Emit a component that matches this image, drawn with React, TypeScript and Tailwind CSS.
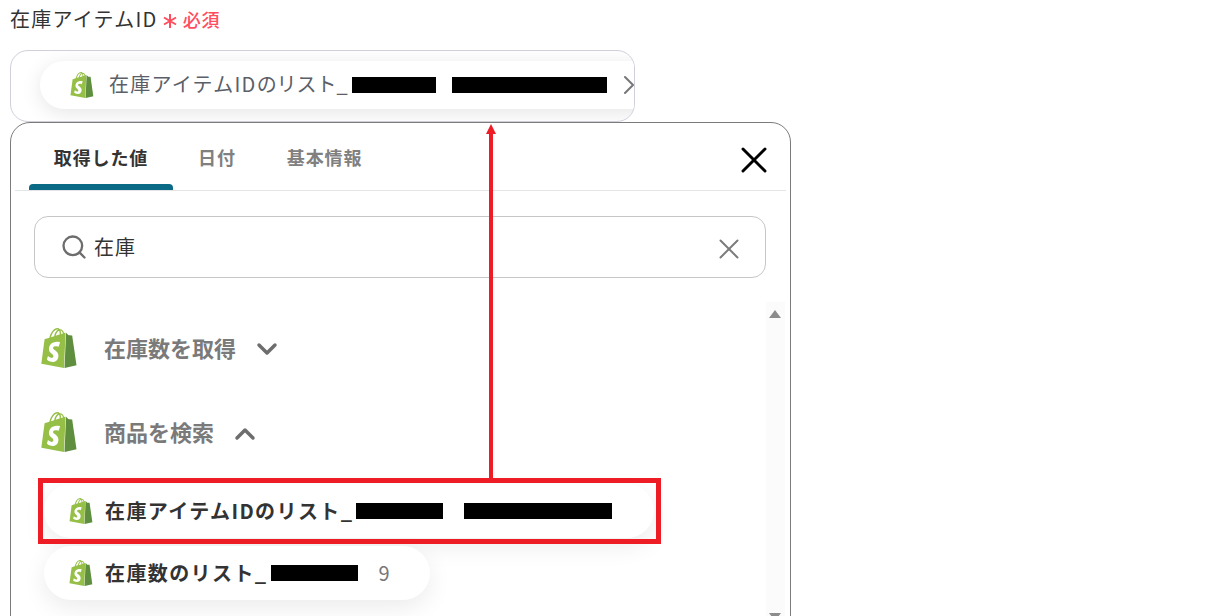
import React from 'react';
import { ChevronDown, ChevronRight, ChevronUp, Search, X } from 'lucide-react';

const FONT = "font-['Noto_Sans_CJK_JP','Noto_Sans',sans-serif]";

const ShopifyIcon: React.FC<{ className: string }> = ({ className }) => (
  <svg viewBox="0 0 24 24" className={className}>
    <path
      fill="#95bf47"
      d="M11.71 11.305s-.81-.424-1.774-.424c-1.447 0-1.504.906-1.504 1.141 0 1.232 3.24 1.715 3.24 4.629 0 2.295-1.44 3.76-3.406 3.76-2.354 0-3.54-1.465-3.54-1.465l.646-2.086s1.245 1.066 2.28 1.066c.675 0 .975-.545.975-.932 0-1.619-2.654-1.694-2.654-4.359-.034-2.237 1.571-4.416 4.827-4.416 1.257 0 1.875.361 1.875.361l-.945 2.715-.02.01zM11.17.83c.136 0 .271.038.405.135-.984.465-2.064 1.639-2.508 3.992-.656.213-1.293.405-1.889.578C7.697 3.75 8.951.84 11.17.84V.83zm1.235 2.949v.135c-.754.232-1.583.484-2.394.736.466-1.777 1.333-2.645 2.085-2.971.193.501.309 1.176.309 2.1zm.539-2.234c.694.074 1.141.867 1.429 1.755-.349.114-.735.231-1.158.366v-.252c0-.752-.096-1.371-.271-1.871v.002zm2.992 1.289c-.02 0-.06.021-.078.021s-.289.075-.714.21c-.423-1.233-1.176-2.37-2.508-2.37h-.115C12.135.209 11.669 0 11.265 0 8.159 0 6.675 3.875 6.21 5.848c-1.194.365-2.063.636-2.16.674-.675.213-.694.232-.772.87-.075.462-1.83 14.063-1.83 14.063L15.009 24l.927-21.166z"
    />
    <path
      fill="#5e8e3e"
      d="M15.337 23.979l7.216-1.561s-2.604-17.613-2.625-17.73c-.018-.116-.114-.192-.211-.192s-1.929-.136-1.929-.136-1.275-1.274-1.439-1.411c-.045-.037-.075-.057-.121-.074l-.914 21.104h.023z"
    />
  </svg>
);

const Redacted: React.FC<{ className: string }> = ({ className }) => (
  <span className={`inline-block h-4 bg-black ${className}`} />
);

const App: React.FC = () => {
  const tabs = ['日付', '基本情報'];

  return (
    <div className={`relative h-[616px] w-[1208px] overflow-hidden bg-white ${FONT}`}>
      <div className="px-[10px] pt-[4px]">
        <div className="flex h-[30px] items-center text-[20px] leading-[30px] text-[#333333]">
          <span className="tracking-[1.25px]">在庫アイテムID</span>
          <svg viewBox="0 0 14 14" className="ml-[5px] mt-[3px] h-[14px] w-[14px]">
            <path d="M7 0v14M1 3.5l12 7M13 3.5l-12 7" stroke="#ff4d5e" strokeWidth="2" fill="none" />
          </svg>
          <span className="ml-[6px] text-[18px] font-medium tracking-[1px] text-[#ff4d5e]">必須</span>
        </div>

        {/* selected value field */}
        <div className="mt-[16px] flex h-[72px] w-[625px] items-center overflow-hidden rounded-[18px] border border-[#cfd0da] bg-white pb-[2px] pl-[29px]">
          <div className="flex h-[48px] w-[620px] shrink-0 items-center rounded-l-full bg-white pl-[29px] text-[20px] text-[#5b6068] shadow-[0_4px_20px_rgba(0,0,0,0.1)]">
            <ShopifyIcon className="mr-[14px] h-[26px] w-[26px] shrink-0" />
            <span className="mb-[2px] whitespace-nowrap">
              <span className="tracking-[1.25px]">在庫アイテムID</span>のリスト_
            </span>
            <Redacted className="ml-[4px] w-[84px]" />
            <Redacted className="ml-4 w-[155px]" />
            <ChevronRight className="ml-[6px] h-8 w-8 shrink-0 text-[#777777]" strokeWidth={1.5} />
          </div>
        </div>

        {/* value picker panel */}
        <div className="relative h-[520px] w-[781px] rounded-t-[20px] border border-[#7b7b7b] bg-white px-[4px]">
          <div className="relative flex h-[68px] items-center border-b border-[#e4e4e7] pl-[14px]">
            <div className="relative flex h-full w-[144px] items-center justify-center pt-[2px] text-[18px] font-bold tracking-[0.9px] text-[#333333]">
              取得した値
              <div className="absolute inset-x-0 bottom-0 h-[6px] rounded-t-[4px] bg-[#0b6a85]" />
            </div>
            <div className="ml-[25px] flex gap-[51px] pt-[2px] text-[18px] font-bold tracking-[0.9px] text-[#808080]">
              {tabs.map((tab) => (
                <span key={tab}>{tab}</span>
              ))}
            </div>
            <X className="absolute right-[10px] top-[15px] h-[44px] w-[44px] text-black" strokeWidth={1.6} />
          </div>

          <div className="mx-[19px] mt-[25px] flex h-[62px] w-[732px] items-center rounded-[14px] border border-[#c6c6c6] pl-[25px] pr-[19px] text-[20px] text-[#333333]">
            <Search className="h-[28px] w-[28px] text-[#6d6d6d]" strokeWidth={2} />
            <span className="ml-[6px] tracking-[1px]">在庫</span>
            <X className="ml-auto mt-1 h-[34px] w-[34px] text-[#7b7b7b]" strokeWidth={1.4} />
          </div>

          <div className="relative mt-[24px] flex">
            <div className="w-[751px] pt-[26px]">
              <div className="flex h-[40px] items-center pl-[24px]">
                <ShopifyIcon className="h-[40px] w-[40px] shrink-0" />
                <span className="mb-[2px] ml-[25px] text-[22px] font-bold text-[#7a7a7a]">在庫数を取得</span>
                <ChevronDown className="ml-[15px] mt-[2px] h-8 w-8 text-[#6d6d6d]" strokeWidth={2.6} />
              </div>
              <div className="mt-[44px] flex h-[40px] items-center pl-[24px]">
                <ShopifyIcon className="h-[40px] w-[40px] shrink-0" />
                <span className="mb-[2px] ml-[25px] text-[22px] font-bold text-[#7a7a7a]">商品を検索</span>
                <ChevronUp className="ml-[15px] mt-[3px] h-8 w-8 text-[#6d6d6d]" strokeWidth={2.6} />
              </div>
              <div className="ml-[29px] mt-[32px] flex h-[54px] w-[610px] items-center rounded-full bg-white pl-[24px] text-[20px] font-bold text-[#333333] shadow-[0_8px_24px_rgba(0,0,0,0.08)]">
                <ShopifyIcon className="mr-[11px] h-[26px] w-[26px] shrink-0" />
                <span className="whitespace-nowrap tracking-[1.4px]">在庫アイテムIDのリスト_</span>
                <Redacted className="ml-[3px] w-[87px]" />
                <Redacted className="ml-[21px] w-[148px]" />
              </div>
              <div className="ml-[29px] mt-[8px] flex h-[54px] w-[386px] items-center rounded-full bg-white pl-[24px] text-[20px] font-bold text-[#333333] shadow-[0_8px_24px_rgba(0,0,0,0.08)]">
                <ShopifyIcon className="mr-[11px] h-[26px] w-[26px] shrink-0" />
                <span className="whitespace-nowrap tracking-[1.4px]">在庫数のリスト_</span>
                <Redacted className="ml-[3px] w-[87px]" />
                <span className="ml-[21px] text-[20px] font-normal text-[#777777]">9</span>
              </div>
            </div>

            {/* scrollbar */}
            <div className="relative h-[320px] w-[19px] shrink-0 bg-[#fbfbfb]">
              <div className="absolute left-[3px] top-[8px] h-0 w-0 border-x-[6.5px] border-b-[8px] border-x-transparent border-b-[#8c8c8c]" />
              <div className="absolute left-[3px] top-[311px] h-0 w-0 border-x-[6.5px] border-t-[8px] border-x-transparent border-t-[#8c8c8c]" />
            </div>
          </div>
        </div>
      </div>

      {/* red annotation overlay */}
      <div className="absolute left-[38px] top-[478px] h-[66px] w-[623px] border-[5px] border-[#ee1c25]" />
      <div className="absolute left-[489px] top-[133px] h-[345px] w-[4px] bg-[#ee1c25]" />
      <div className="absolute left-[486px] top-[124px] h-0 w-0 border-x-[5.5px] border-b-[10px] border-x-transparent border-b-[#ee1c25]" />
    </div>
  );
};

export default App;
